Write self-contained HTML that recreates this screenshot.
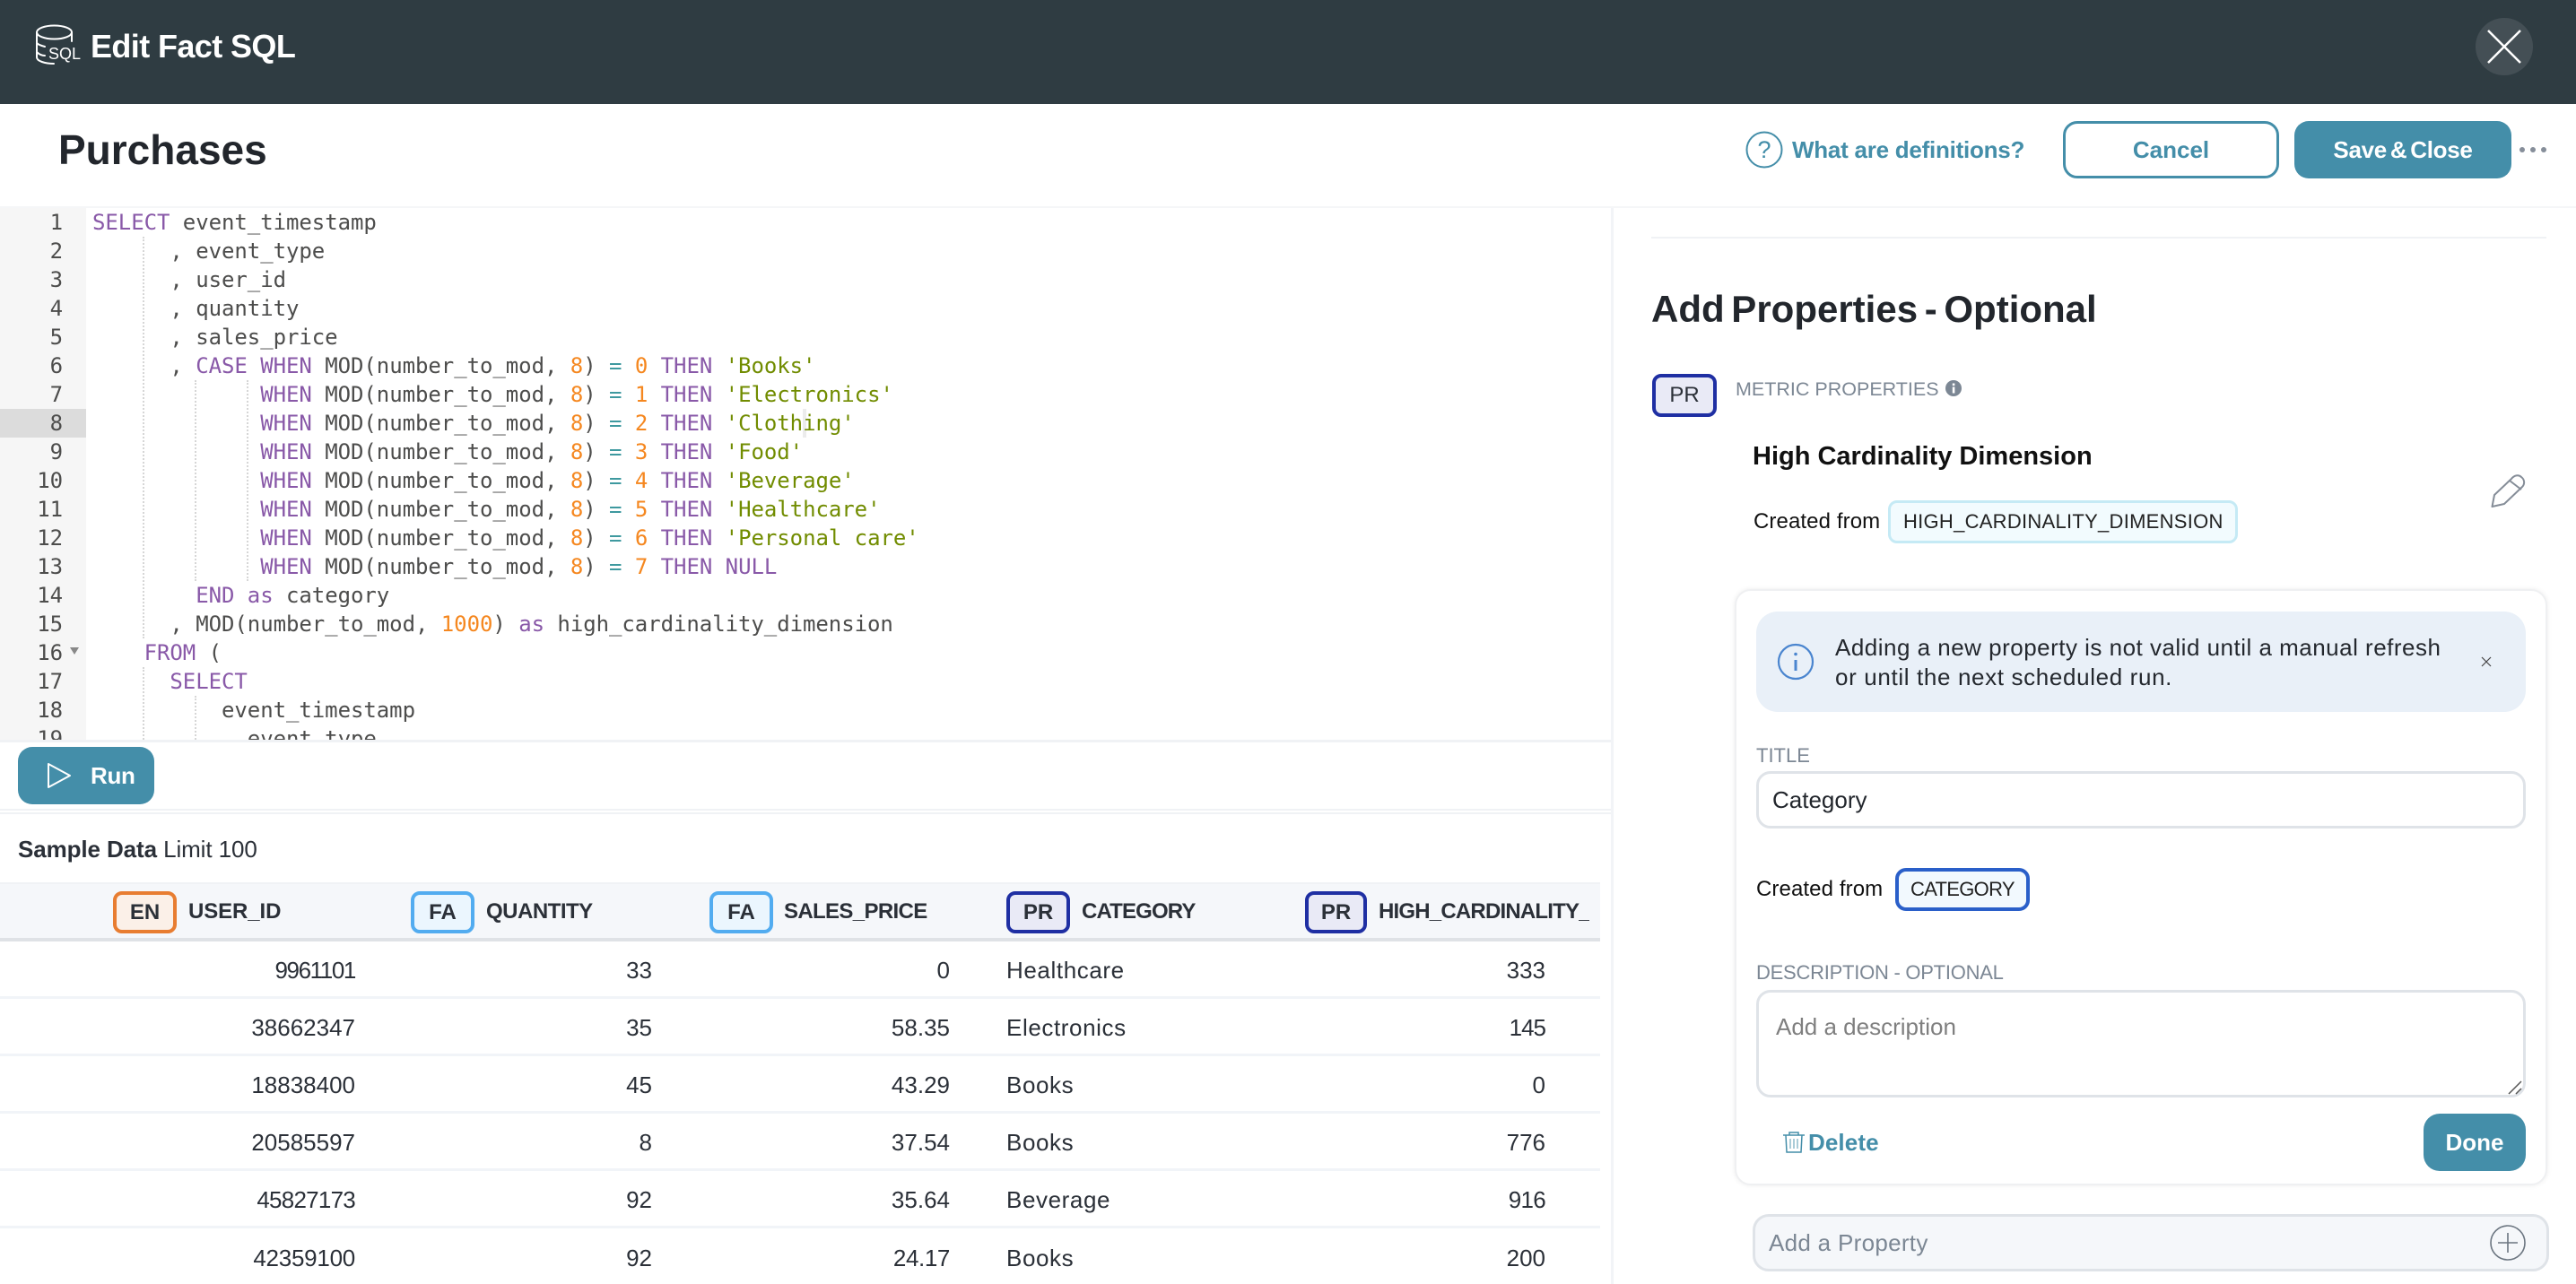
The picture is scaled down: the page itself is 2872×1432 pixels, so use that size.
<!DOCTYPE html>
<html><head><meta charset="utf-8"><style>
*{box-sizing:border-box}
html,body{margin:0;padding:0;width:2872px;height:1432px;overflow:hidden;background:#fff}
body{position:relative;font-family:"Liberation Sans",sans-serif;color:#2b3038}
.a{position:absolute}
.t{position:absolute;white-space:nowrap;height:32px;line-height:32px;font-size:26px}
.b{font-weight:700}
.code{position:absolute;left:0;top:232px;width:1796px;height:593px;overflow:hidden;font-family:"DejaVu Sans Mono",monospace;font-size:24px;color:#4d4d4c}
.ln{position:absolute;left:103px;height:32px;line-height:32px;white-space:pre;letter-spacing:-.05px}
.g{position:absolute;left:0;width:70px;text-align:right;height:32px;line-height:32px;letter-spacing:-.05px;color:#4d4d4c}
.k{color:#8959a8}.n{color:#f5871f}.s{color:#718c00}.o{color:#3e999f}
.ig{position:absolute;width:0;border-left:2px dotted #d6d6d6}
.badge{position:absolute;border-radius:10px;border:4px solid;text-align:center;font-size:24px;font-weight:700;color:#2b3038;line-height:39px;height:47px;top:994px}
.en{border-color:#e87d31;background:#fbf0e8}
.fa{border-color:#52acf0;background:#ebf6fe}
.pr{border-color:#1f2fa3;background:#e9eaf6}
.hd{font-size:24px;font-weight:700;top:1001px}
.c{font-size:26px}
.r{text-align:right}
.sep{position:absolute;left:0;width:1784px;height:3px;background:#f1f4f8}
.lab{color:#7c8794;font-size:22px}
.cl{left:1122px;letter-spacing:.6px}
</style></head><body>

<div class="a" style="left:0;top:0;width:2872px;height:116px;background:#2f3c42"></div>
<svg class="a" style="left:36px;top:24px" width="60" height="52" viewBox="36 24 60 52" fill="none" stroke="#fff" stroke-width="2" stroke-linecap="round">
<ellipse cx="60.500" cy="36" rx="19.500" ry="7.500"/>
<path d="M41 36V64C41 68 50 71 60 71M80 36V46M41 48C43 50 46 51 50 52M41 58C43 60 46 62 50 62"/>
<text x="54" y="66" font-family="Liberation Sans" font-size="18" fill="#fff" stroke="none">SQL</text>
</svg>
<div class="t b" style="left:101px;top:34px;font-size:36px;height:36px;line-height:36px;color:#fff;letter-spacing:-.6px">Edit Fact SQL</div>
<div class="a" style="left:2760px;top:20px;width:64px;height:64px;border-radius:50%;background:#444f55"></div>
<svg class="a" style="left:2760px;top:20px" width="64" height="64" fill="none" stroke="#fff" stroke-width="2.500"><path d="M14 14L50 50M50 14L14 50"/></svg>

<div class="t b" style="left:65px;top:142px;font-size:46px;height:50px;line-height:50px;color:#22262c">Purchases</div>

<svg class="a" style="left:1945px;top:145px" width="44" height="44" fill="none" stroke="#448ea9" stroke-width="2"><circle cx="22" cy="22" r="19.500"/></svg>
<div class="t" style="left:1958px;top:151px;color:#448ea9;width:18px;text-align:center;font-size:27px">?</div>
<div class="t b" style="left:1998px;top:151px;color:#448ea9;font-size:26px;letter-spacing:-.25px">What are definitions?</div>
<div class="a b" style="left:2300px;top:135px;width:241px;height:64px;border:3px solid #448ea9;border-radius:16px;text-align:center;line-height:58px;font-size:26px;color:#448ea9">Cancel</div>
<div class="a b" style="left:2558px;top:135px;width:242px;height:64px;background:#448ea9;border-radius:16px;text-align:center;line-height:64px;font-size:26px;color:#fff;word-spacing:-3px;letter-spacing:-.3px">Save &amp; Close</div>
<svg class="a" style="left:2805px;top:160px" width="40" height="14" fill="#868e9a"><circle cx="7" cy="7" r="3"/><circle cx="19" cy="7" r="3"/><circle cx="31" cy="7" r="3"/></svg>

<div class="a" style="left:0;top:230px;width:2872px;height:2px;background:#f5f6f8"></div>

<!-- Editor -->
<div class="code">
<div class="a" style="left:0;top:0;width:96px;height:593px;background:#f6f6f6"></div>
<div class="a" style="left:0;top:224px;width:96px;height:32px;background:#dcdcdc"></div>
<div class="a" style="left:895px;top:224px;width:4px;height:32px;background:#ececec"></div>
<div class="ig" style="left:159px;top:32px;height:448px"></div>
<div class="ig" style="left:159px;top:512px;height:81px"></div>
<div class="ig" style="left:217px;top:192px;height:224px"></div>
<div class="ig" style="left:275px;top:192px;height:224px"></div>
<div class="ig" style="left:217px;top:544px;height:49px"></div>
<svg class="a" style="left:78px;top:489px" width="10" height="10"><path d="M0 1H10L5 9Z" fill="#888"/></svg>
<div class="g" style="top:0">1</div><div class="g" style="top:32px">2</div><div class="g" style="top:64px">3</div><div class="g" style="top:96px">4</div><div class="g" style="top:128px">5</div><div class="g" style="top:160px">6</div><div class="g" style="top:192px">7</div><div class="g" style="top:224px">8</div><div class="g" style="top:256px">9</div><div class="g" style="top:288px">10</div><div class="g" style="top:320px">11</div><div class="g" style="top:352px">12</div><div class="g" style="top:384px">13</div><div class="g" style="top:416px">14</div><div class="g" style="top:448px">15</div><div class="g" style="top:480px">16</div><div class="g" style="top:512px">17</div><div class="g" style="top:544px">18</div><div class="g" style="top:576px">19</div>
<div class="ln" style="top:0"><span class="k">SELECT</span> event_timestamp</div>
<div class="ln" style="top:32px">      , event_type</div>
<div class="ln" style="top:64px">      , user_id</div>
<div class="ln" style="top:96px">      , quantity</div>
<div class="ln" style="top:128px">      , sales_price</div>
<div class="ln" style="top:160px">      , <span class="k">CASE WHEN</span> MOD(number_to_mod, <span class="n">8</span>) <span class="o">=</span> <span class="n">0</span> <span class="k">THEN</span> <span class="s">'Books'</span></div>
<div class="ln" style="top:192px">             <span class="k">WHEN</span> MOD(number_to_mod, <span class="n">8</span>) <span class="o">=</span> <span class="n">1</span> <span class="k">THEN</span> <span class="s">'Electronics'</span></div>
<div class="ln" style="top:224px">             <span class="k">WHEN</span> MOD(number_to_mod, <span class="n">8</span>) <span class="o">=</span> <span class="n">2</span> <span class="k">THEN</span> <span class="s">'Clothing'</span></div>
<div class="ln" style="top:256px">             <span class="k">WHEN</span> MOD(number_to_mod, <span class="n">8</span>) <span class="o">=</span> <span class="n">3</span> <span class="k">THEN</span> <span class="s">'Food'</span></div>
<div class="ln" style="top:288px">             <span class="k">WHEN</span> MOD(number_to_mod, <span class="n">8</span>) <span class="o">=</span> <span class="n">4</span> <span class="k">THEN</span> <span class="s">'Beverage'</span></div>
<div class="ln" style="top:320px">             <span class="k">WHEN</span> MOD(number_to_mod, <span class="n">8</span>) <span class="o">=</span> <span class="n">5</span> <span class="k">THEN</span> <span class="s">'Healthcare'</span></div>
<div class="ln" style="top:352px">             <span class="k">WHEN</span> MOD(number_to_mod, <span class="n">8</span>) <span class="o">=</span> <span class="n">6</span> <span class="k">THEN</span> <span class="s">'Personal care'</span></div>
<div class="ln" style="top:384px">             <span class="k">WHEN</span> MOD(number_to_mod, <span class="n">8</span>) <span class="o">=</span> <span class="n">7</span> <span class="k">THEN</span> <span class="k">NULL</span></div>
<div class="ln" style="top:416px">        <span class="k">END as</span> category</div>
<div class="ln" style="top:448px">      , MOD(number_to_mod, <span class="n">1000</span>) <span class="k">as</span> high_cardinality_dimension</div>
<div class="ln" style="top:480px">    <span class="k">FROM</span> (</div>
<div class="ln" style="top:512px">      <span class="k">SELECT</span></div>
<div class="ln" style="top:544px">          event_timestamp</div>
<div class="ln" style="top:576px">          , event_type</div>
</div>
<div class="a" style="left:0;top:825px;width:1796px;height:3px;background:#f0f2f5"></div>

<div class="a" style="left:20px;top:833px;width:152px;height:64px;background:#448ea9;border-radius:16px"></div>
<svg class="a" style="left:50px;top:849px" width="32" height="32" fill="none" stroke="#fff" stroke-width="2"><path d="M4 3V29L28 16Z" stroke-linejoin="round"/></svg>
<div class="t b" style="left:101px;top:849px;color:#fff;letter-spacing:-.3px">Run</div>

<div class="a" style="left:0;top:902px;width:1796px;height:2px;background:#f0f2f5"></div>
<div class="a" style="left:0;top:906px;width:1796px;height:2px;background:#f0f2f5"></div>

<div class="t" style="left:20px;top:931px;letter-spacing:-.1px"><span class="b">Sample Data</span> Limit 100</div>

<!-- Table -->
<div class="a" style="left:0;top:984px;width:1784px;height:66px;background:#f5f7fa;border-top:2px solid #f0f2f5;border-bottom:4px solid #dfe2e6"></div>
<div class="badge en" style="left:126px;width:71px">EN</div>
<div class="t hd" style="left:210px;letter-spacing:-.1px">USER_ID</div>
<div class="badge fa" style="left:458px;width:71px">FA</div>
<div class="t hd" style="left:542px;letter-spacing:-.5px">QUANTITY</div>
<div class="badge fa" style="left:791px;width:71px">FA</div>
<div class="t hd" style="left:874px;letter-spacing:-.65px">SALES_PRICE</div>
<div class="badge pr" style="left:1122px;width:71px">PR</div>
<div class="t hd" style="left:1206px;letter-spacing:-.85px">CATEGORY</div>
<div class="badge pr" style="left:1455px;width:69px">PR</div>
<div class="t hd" style="left:1537px;width:235px;overflow:hidden;letter-spacing:-.8px">HIGH_CARDINALITY_DIMENSION</div>

<div class="sep" style="top:1111px"></div><div class="sep" style="top:1175px"></div><div class="sep" style="top:1239px"></div><div class="sep" style="top:1303px"></div><div class="sep" style="top:1367px"></div>

<div class="t c r" style="right:2476px;top:1066px;letter-spacing:-1.4px">9961101</div><div class="t c r" style="right:2145px;top:1066px">33</div><div class="t c r" style="right:1813px;top:1066px">0</div><div class="t c cl" style="top:1066px">Healthcare</div><div class="t c r" style="right:1149px;top:1066px">333</div>
<div class="t c r" style="right:2476px;top:1130px">38662347</div><div class="t c r" style="right:2145px;top:1130px">35</div><div class="t c r" style="right:1813px;top:1130px">58.35</div><div class="t c cl" style="top:1130px">Electronics</div><div class="t c r" style="right:1149px;top:1130px;letter-spacing:-1px">145</div>
<div class="t c r" style="right:2476px;top:1194px">18838400</div><div class="t c r" style="right:2145px;top:1194px">45</div><div class="t c r" style="right:1813px;top:1194px">43.29</div><div class="t c cl" style="top:1194px">Books</div><div class="t c r" style="right:1149px;top:1194px">0</div>
<div class="t c r" style="right:2476px;top:1258px">20585597</div><div class="t c r" style="right:2145px;top:1258px">8</div><div class="t c r" style="right:1813px;top:1258px">37.54</div><div class="t c cl" style="top:1258px">Books</div><div class="t c r" style="right:1149px;top:1258px">776</div>
<div class="t c r" style="right:2476px;top:1322px;letter-spacing:-.75px">45827173</div><div class="t c r" style="right:2145px;top:1322px">92</div><div class="t c r" style="right:1813px;top:1322px">35.64</div><div class="t c cl" style="top:1322px">Beverage</div><div class="t c r" style="right:1149px;top:1322px;letter-spacing:-.7px">916</div>
<div class="t c r" style="right:2476px;top:1387px;letter-spacing:-.25px">42359100</div><div class="t c r" style="right:2145px;top:1387px">92</div><div class="t c r" style="right:1813px;top:1387px;letter-spacing:-.4px">24.17</div><div class="t c cl" style="top:1387px">Books</div><div class="t c r" style="right:1149px;top:1387px">200</div>

<!-- Divider -->
<div class="a" style="left:1796px;top:232px;width:3px;height:1200px;background:#f2f4f7"></div>

<!-- Right panel -->
<div class="a" style="left:1841px;top:264px;width:998px;height:2px;background:#f0f2f5"></div>
<div class="t b" style="left:1841px;top:322px;font-size:42px;height:46px;line-height:46px;word-spacing:-4px;color:#22262c">Add Properties - Optional</div>

<div class="a" style="left:1842px;top:417px;width:72px;height:48px;border:4px solid #1f2fa3;background:#e9eaf6;border-radius:10px;text-align:center;line-height:40px;font-size:24px;color:#2b3038">PR</div>
<div class="t lab" style="left:1935px;top:418px;font-size:21.500px">METRIC PROPERTIES</div>
<svg class="a" style="left:2168px;top:423px" width="20" height="20"><circle cx="10" cy="10" r="9" fill="#7c8794"/><rect x="8.800" y="8.500" width="2.600" height="7" fill="#fff"/><rect x="8.800" y="4.500" width="2.600" height="2.600" fill="#fff"/></svg>

<div class="t b" style="left:1954px;top:492px;font-size:29px;height:34px;line-height:34px;color:#111">High Cardinality Dimension</div>
<div class="t" style="left:1955px;top:566px;font-size:24px;color:#111;letter-spacing:.1px">Created from</div>
<div class="a" style="left:2105px;top:558px;width:390px;height:48px;border:3px solid #c5eaf5;background:#f2fbfe;border-radius:10px"></div>
<div class="t" style="left:2122px;top:566px;font-size:22px;color:#222;letter-spacing:.27px">HIGH_CARDINALITY_DIMENSION</div>
<svg class="a" style="left:2770px;top:522px" width="52" height="52" viewBox="2770 522 52 52" fill="none" stroke="#858d98" stroke-width="2" stroke-linejoin="round"><path d="M2778.500 565L2781 552L2800 534C2803 530 2808 529 2811 532C2815 535 2815 540 2812 543L2792 562Z"/><path d="M2798 536L2811 546"/></svg>

<!-- Card -->
<div class="a" style="left:1934px;top:657px;width:906px;height:665px;background:#fff;border:2px solid #eff0f2;border-radius:18px;box-shadow:0 0 6px rgba(0,0,0,.08)"></div>
<div class="a" style="left:1958px;top:682px;width:858px;height:112px;background:#e9f0f8;border-radius:24px"></div>
<svg class="a" style="left:1980px;top:716px" width="44" height="44" fill="none" stroke="#4a85cf" stroke-width="2.200"><circle cx="22" cy="22" r="19"/><path d="M22 20V32" stroke-width="3"/><circle cx="22" cy="13.500" r="1.800" fill="#4a85cf" stroke="none"/></svg>
<div class="t" style="left:2046px;top:706px;letter-spacing:.49px;color:#24282e">Adding a new property is not valid until a manual refresh</div>
<div class="t" style="left:2046px;top:739px;letter-spacing:.64px;color:#24282e">or until the next scheduled run.</div>
<svg class="a" style="left:2766px;top:732px" width="12" height="12" fill="none" stroke="#444" stroke-width="1.200"><path d="M1 1L11 11M11 1L1 11"/></svg>

<div class="t lab" style="left:1958px;top:827px">TITLE</div>
<div class="a" style="left:1958px;top:860px;width:858px;height:64px;border:3px solid #dfe3e8;border-radius:16px"></div>
<div class="t" style="left:1976px;top:876px;color:#22262c">Category</div>

<div class="t" style="left:1958px;top:976px;font-size:24px;color:#111;letter-spacing:.1px">Created from</div>
<div class="a" style="left:2113px;top:968px;width:150px;height:48px;border:4px solid #2a5fc9;background:#f2f9fe;border-radius:12px"></div>
<div class="t" style="left:2130px;top:976px;font-size:22px;color:#222;letter-spacing:-.7px">CATEGORY</div>

<div class="t lab" style="left:1958px;top:1069px;letter-spacing:-.25px">DESCRIPTION - OPTIONAL</div>
<div class="a" style="left:1958px;top:1104px;width:858px;height:120px;border:3px solid #dfe3e8;border-radius:16px"></div>
<div class="t" style="left:1980px;top:1129px;color:#7f7f7f">Add a description</div>
<svg class="a" style="left:2796px;top:1204px" width="18" height="18" fill="none" stroke="#555" stroke-width="1.500"><path d="M1 16L15 2M9 16L15 10"/></svg>

<svg class="a" style="left:1986px;top:1260px" width="28" height="28" viewBox="1986 1260 28 28" fill="none" stroke="#448ea9" stroke-width="1.500"><path d="M1988 1266H2012M1995 1266V1263H2005V1266M1991 1266L1992 1285H2008L2009 1266"/><path d="M1996 1270V1281M2000 1270V1281M2004 1270V1281" stroke-opacity=".6"/></svg>
<div class="t b" style="left:2016px;top:1258px;color:#448ea9;letter-spacing:.1px">Delete</div>
<div class="a b" style="left:2702px;top:1242px;width:114px;height:64px;background:#448ea9;border-radius:18px;color:#fff;text-align:center;line-height:64px;font-size:26px">Done</div>

<div class="a" style="left:1954px;top:1354px;width:888px;height:64px;background:#f5f7fa;border:3px solid #dfe3e8;border-radius:18px"></div>
<div class="t" style="left:1972px;top:1370px;color:#7c8794;letter-spacing:.3px">Add a Property</div>
<svg class="a" style="left:2775px;top:1365px" width="42" height="42" fill="none" stroke="#6b7580" stroke-width="1.600"><circle cx="21" cy="21" r="19"/><path d="M21 10V32M10 21H32"/></svg>
</body></html>
